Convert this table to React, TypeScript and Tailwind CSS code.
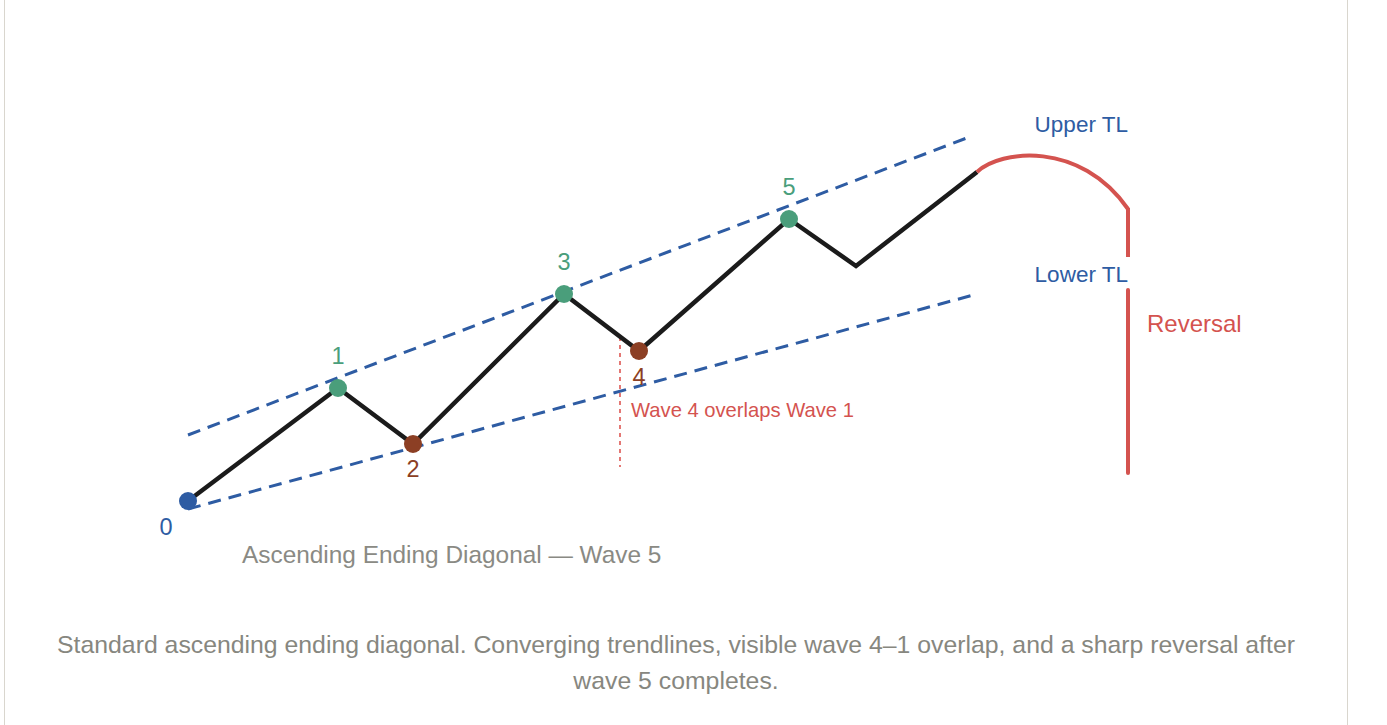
import React from "react";

const BLUE = "#2e5ca3";
const GREEN = "#4a9e7b";
const BROWN = "#8c3f24";
const RED = "#d4534f";
const INK = "#1b1b1b";

function Chart() {
  const font = "'Liberation Sans', Arial, sans-serif";
  return (
    <svg
      width={1342}
      height={627}
      viewBox="5 0 1342 627"
      className="block"
      style={{ fontFamily: font }}
    >
      {/* trendlines */}
      <line x1={188} y1={435} x2={972} y2={136} stroke={BLUE} strokeWidth={3} strokeDasharray="13 8" />
      <line x1={188} y1={509} x2={977} y2={294} stroke={BLUE} strokeWidth={3} strokeDasharray="13 8" />

      {/* wave 4 overlap marker */}
      <line x1={620} y1={337} x2={620} y2={467} stroke="#e26a66" strokeWidth={1.8} strokeDasharray="4 4" />

      {/* price path */}
      <polyline
        points="188,501 338,388 413,444 564,294 639,351 789,219 856,266 977,172"
        fill="none"
        stroke={INK}
        strokeWidth={4.5}
        strokeLinejoin="miter"
      />

      {/* reversal */}
      <path d="M977 172 C1000 150, 1080 140, 1128 209" fill="none" stroke={RED} strokeWidth={4} />
      <line x1={1128} y1={208} x2={1128} y2={257} stroke={RED} strokeWidth={4} />
      <line x1={1128} y1={290} x2={1128} y2={473} stroke={RED} strokeWidth={4} strokeLinecap="round" />

      {/* points */}
      <circle cx={188} cy={501} r={9} fill={BLUE} />
      <circle cx={338} cy={388} r={9} fill={GREEN} />
      <circle cx={413} cy={444} r={9} fill={BROWN} />
      <circle cx={564} cy={294} r={9} fill={GREEN} />
      <circle cx={639} cy={351} r={9} fill={BROWN} />
      <circle cx={789} cy={219} r={9} fill={GREEN} />

      {/* point labels */}
      <g fontSize={23.5} textAnchor="middle">
        <text x={166} y={535} fill={BLUE}>0</text>
        <text x={338} y={364} fill={GREEN}>1</text>
        <text x={413} y={477} fill={BROWN}>2</text>
        <text x={564} y={270} fill={GREEN}>3</text>
        <text x={639} y={385} fill={BROWN}>4</text>
        <text x={789} y={195} fill={GREEN}>5</text>
      </g>

      <text x={631} y={417} fontSize={20.2} fill={RED}>Wave 4 overlaps Wave 1</text>
      <text x={1128} y={132} fontSize={22.5} fill={BLUE} textAnchor="end">Upper TL</text>
      <text x={1128} y={282} fontSize={22.5} fill={BLUE} textAnchor="end">Lower TL</text>
      <text x={1147} y={332} fontSize={24} fill={RED}>Reversal</text>
      <text x={242} y={563} fontSize={24.4} fill="#8a8a84">Ascending Ending Diagonal — Wave 5</text>
    </svg>
  );
}

export default function App() {
  return (
    <div className="h-[725px] w-full overflow-hidden bg-white">
      <div className="ml-[4px] h-[725px] w-[1344px] border-x border-[#d9d6ce] bg-white">
        <Chart />
        <p
          className="px-[20px] text-center text-[24.8px] leading-[36px] text-[#87877f]"
          style={{ fontFamily: "'Liberation Sans', Arial, sans-serif" }}
        >
          Standard ascending ending diagonal. Converging trendlines, visible wave 4–1 overlap, and a sharp reversal after
          <br />
          wave 5 completes.
        </p>
      </div>
    </div>
  );
}
